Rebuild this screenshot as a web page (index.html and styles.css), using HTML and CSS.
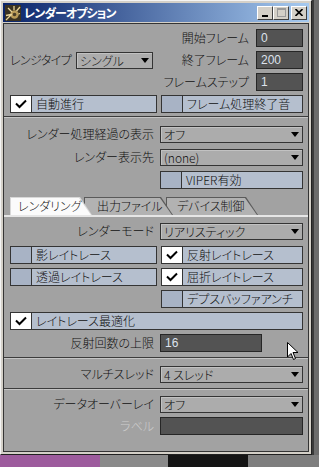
FILE: index.html
```html
<!DOCTYPE html>
<html>
<head>
  <meta charset="UTF-8">
  <title>レンダーオプション</title>
  <link rel="stylesheet" href="styles.css">
</head>
<body>
  <div class="desk">
    <div class="desk-row">
      <div class="window">
        <!-- タイトルバー -->
        <div class="titlebar">
          <svg class="app-icon" width="16" height="16" viewBox="0 0 16 16">
            <rect width="16" height="16" fill="#3a3222"/>
            <circle cx="9.5" cy="9.5" r="4.2" fill="#b89a58"/>
            <circle cx="9.5" cy="9.5" r="1.8" fill="#4a3e28"/>
            <path d="M1 15 L7 9 M1 10.5 L6 9.5 M3 3 L7 7 M9 1 L9 5 M15 2 L11.5 6 M15 8.5 L13.5 9" stroke="#e8d49a" stroke-width="1.3"/>
          </svg>
          <span class="title">レンダーオプション</span>
          <div class="win-btns">
            <span class="wbtn"><i class="g-min"></i></span>
            <span class="wbtn"><i class="g-max"></i></span>
            <span class="wbtn close">
              <svg width="8" height="7" viewBox="0 0 8 7"><path d="M0.5 0 L7.5 7 M7.5 0 L0.5 7" stroke="#000" stroke-width="1.6"/></svg>
            </span>
          </div>
        </div>

        <div class="panel">
          <!-- フレーム設定 -->
          <div class="frame-grid">
            <div></div>
            <div class="num-row"><span class="lbl">開始フレーム</span><span class="num">0</span></div>
            <div class="range-row"><span class="lbl tight">レンジタイプ</span><div class="select range">シングル<i class="arrow"></i></div></div>
            <div class="num-row"><span class="lbl">終了フレーム</span><span class="num">200</span></div>
            <div></div>
            <div class="num-row"><span class="lbl">フレームステップ</span><span class="num">1</span></div>
            <div class="check on"><span class="box"><svg class="tick" width="12" height="10" viewBox="0 0 12 10"><path d="M1 4.5 L4.5 8 L11 1.5" fill="none" stroke="#000" stroke-width="2"/></svg></span><span class="text">自動進行</span></div>
            <div class="check"><span class="box"></span><span class="text">フレーム処理終了音</span></div>
          </div>

          <div class="sep"></div>

          <!-- 表示 -->
          <div class="section s-display">
            <div class="opt-row"><span class="lbl">レンダー処理経過の表示</span><div class="select">オフ<i class="arrow"></i></div></div>
            <div class="opt-row"><span class="lbl">レンダー表示先</span><div class="select">(none)<i class="arrow"></i></div></div>
            <div class="opt-row"><span></span><div class="check"><span class="box"></span><span class="text">VIPER有効</span></div></div>
          </div>

          <!-- タブ -->
          <div class="tabs">
            <span class="tab active">レンダリング</span>
            <span class="tab t2">出力ファイル</span>
            <span class="tab t3">デバイス制御</span>
          </div>

          <div class="section s-render">
            <div class="opt-row"><span class="lbl">レンダーモード</span><div class="select">リアリスティック<i class="arrow"></i></div></div>
            <div class="pair">
              <div class="check"><span class="box"></span><span class="text">影レイトレース</span></div>
              <div class="check on"><span class="box"><svg class="tick" width="12" height="10" viewBox="0 0 12 10"><path d="M1 4.5 L4.5 8 L11 1.5" fill="none" stroke="#000" stroke-width="2"/></svg></span><span class="text">反射レイトレース</span></div>
            </div>
            <div class="pair">
              <div class="check"><span class="box"></span><span class="text">透過レイトレース</span></div>
              <div class="check on"><span class="box"><svg class="tick" width="12" height="10" viewBox="0 0 12 10"><path d="M1 4.5 L4.5 8 L11 1.5" fill="none" stroke="#000" stroke-width="2"/></svg></span><span class="text">屈折レイトレース</span></div>
            </div>
            <div class="pair">
              <div></div>
              <div class="check"><span class="box"></span><span class="text">デプスバッファアンチ</span></div>
            </div>
            <div class="check on"><span class="box"><svg class="tick" width="12" height="10" viewBox="0 0 12 10"><path d="M1 4.5 L4.5 8 L11 1.5" fill="none" stroke="#000" stroke-width="2"/></svg></span><span class="text">レイトレース最適化</span></div>
            <div class="opt-row"><span class="lbl">反射回数の上限</span><span class="num depth">16</span></div>
          </div>

          <div class="sep"></div>

          <div class="section s-thread">
            <div class="opt-row"><span class="lbl">マルチスレッド</span><div class="select">4 スレッド<i class="arrow"></i></div></div>
          </div>

          <div class="sep"></div>

          <div class="section s-overlay">
            <div class="opt-row"><span class="lbl">データオーバーレイ</span><div class="select">オフ<i class="arrow"></i></div></div>
            <div class="opt-row"><span class="lbl disabled">ラベル</span><span class="num wide"></span></div>
          </div>
        </div>

        <!-- マウスカーソル -->
        <svg class="cursor" width="12" height="19" viewBox="0 0 12 19">
          <path d="M0.5 0.5 L0.5 15 L4 11.5 L6.5 17.5 L8.5 16.5 L6 10.5 L11 10.5 Z" fill="#fff" stroke="#000" stroke-width="1"/>
        </svg>
      </div>
      <div class="desk-edge"></div>
    </div>
    <div class="desk-floor"></div>
  </div>
</body>
</html>
```

FILE: styles.css
```css
/* Colours */
:root {
  --frame: #d4d0c8;
  --panel: #a2a2a2;
  --select: #acacac;
  --line: #343434;
  --check-text: #b5bfce;
  --check-box: #a8b3c5;
  --field: #535353;
}

/* General */
body {
  margin: 0;
  font-family: "Noto Sans CJK JP", "Liberation Sans", sans-serif;
  font-size: 12px;
  font-weight: 300;
  font-feature-settings: "palt";
  color: #111;
  background: #2c2c2c;
}
.desk {
  width: 319px;
  height: 467px;
  display: flex;
  flex-direction: column;
}
.desk-row {
  display: flex;
  height: 455px;
}
.desk-edge {
  flex: 1;
  background: #6c6c6c;
  border-left: 2px solid #3a3a3a;
}
.desk-floor {
  flex: 1;
  background: linear-gradient(to right, #9d5b9d 0 100px, #8a8a8a 100px 168px, #141414 168px 248px, #7e7e7e 248px);
}

/* Window */
.window {
  position: relative;
  box-sizing: border-box;
  width: 312px;
  height: 455px;
  padding: 2px;
  background: var(--frame);
  border: 1px solid;
  border-color: #f4f4f4 #202020 #202020 #f4f4f4;
  display: flex;
  flex-direction: column;
}
.titlebar {
  height: 19px;
  display: flex;
  align-items: center;
  padding: 0 2px 0 2px;
  background: linear-gradient(to right, #0a246a, #a6caf0);
}
.app-icon {
  margin-right: 3px;
}
.title {
  flex: 1;
  color: #fff;
  font-weight: bold;
  font-size: 12px;
  letter-spacing: -0.9px;
  line-height: 19px;
}
.win-btns {
  display: flex;
}
.wbtn {
  box-sizing: border-box;
  width: 16px;
  height: 14px;
  background: var(--frame);
  border: 1px solid;
  border-color: #fff #404040 #404040 #fff;
  display: flex;
  align-items: center;
  justify-content: center;
}
.wbtn.close {
  margin-left: 2px;
}
.g-min {
  width: 6px;
  height: 2px;
  background: #000;
  margin-top: 6px;
}
.g-max {
  width: 7px;
  height: 6px;
  border: 1px solid #9a9a9a;
  border-top-width: 2px;
}

/* Panel */
.panel {
  flex: 1;
  margin-top: 1px;
  background: var(--panel);
  border: 1px solid var(--line);
}
.frame-grid {
  display: grid;
  grid-template-columns: 147px 1fr;
  grid-auto-rows: 18px;
  column-gap: 4px;
  row-gap: 4px;
  padding: 5px 5px 0 6px;
}
.num-row {
  display: flex;
  align-items: center;
}
.num-row .lbl {
  flex: 1;
  text-align: right;
}
.num-row .num {
  width: 47px;
  margin-left: 7px;
}
.range-row {
  display: flex;
  align-items: center;
}
.select.range {
  width: 77px;
  margin-left: auto;
  margin-right: 4px;
}
.lbl {
  line-height: 18px;
  white-space: nowrap;
}
.lbl.tight {
  letter-spacing: -0.6px;
}
.lbl.disabled {
  color: #cdcdcd;
}

/* Separator */
.sep {
  height: 1px;
  border-top: 1px solid #3c3c3c;
  background: #c4c4c4;
}
.frame-grid + .sep {
  margin-top: 3px;
}

/* Sections */
.section {
  display: flex;
  flex-direction: column;
  gap: 4px;
  padding: 0 5px 0 6px;
}
.s-display {
  padding-top: 7px;
  gap: 5px;
}
.s-render {
  padding-top: 5px;
  padding-bottom: 5px;
}
.s-render .opt-row:first-child {
  margin-bottom: 2px;
}
.s-thread {
  padding-top: 6px;
  padding-bottom: 5px;
}
.s-overlay {
  padding-top: 5px;
}
.opt-row {
  display: grid;
  grid-template-columns: 144px 1fr;
  column-gap: 6px;
  align-items: center;
}
.opt-row .lbl {
  text-align: right;
}
.pair {
  display: grid;
  grid-template-columns: 147px 1fr;
  column-gap: 4px;
}

/* Dropdowns */
.select {
  box-sizing: border-box;
  height: 17px;
  line-height: 15px;
  padding-left: 3px;
  background: var(--select);
  border: 1px solid var(--line);
  box-shadow: inset 1px 1px #c2c2c2;
  display: flex;
  align-items: center;
}
.arrow {
  margin-left: auto;
  margin-right: 3px;
  width: 0;
  height: 0;
  border-left: 4.5px solid transparent;
  border-right: 4.5px solid transparent;
  border-top: 5px solid #000;
}

/* Number fields */
.num {
  box-sizing: border-box;
  height: 18px;
  line-height: 16px;
  padding-left: 4px;
  background: var(--field);
  border: 1px solid #262626;
  color: #dde2ec;
  font-family: "Liberation Sans", sans-serif;
  font-size: 12px;
  font-weight: normal;
}
.num.depth {
  width: 102px;
}

/* Check fields */
.check {
  box-sizing: border-box;
  height: 18px;
  display: flex;
  border: 1px solid var(--line);
  background: var(--check-text);
}
.check .box {
  width: 20px;
  flex: none;
  background: var(--check-box);
  border-right: 1px solid var(--line);
  display: flex;
  align-items: center;
  justify-content: center;
}
.check.on .box {
  background: #fff;
}
.check .text {
  padding-left: 4px;
  line-height: 16px;
  white-space: nowrap;
}

/* Tabs */
.tabs {
  display: flex;
  margin-top: 8px;
  padding-left: 6px;
  border-bottom: 2px solid #e6e6e6;
}
.tab {
  position: relative;
  z-index: 3;
  box-sizing: border-box;
  height: 18px;
  line-height: 18px;
  padding-left: 8px;
  width: 82px;
  white-space: nowrap;
}
.tab::before,
.tab::after {
  content: '';
  position: absolute;
  z-index: -1;
  clip-path: polygon(0 0, calc(100% - 12px) 0, 100% 100%, 0 100%);
}
.tab::before {
  inset: 0;
  background: #5a5a5a;
}
.tab::after {
  inset: 1px 1px 0 1px;
  background: #b2b2b2;
}
.tab.active::before {
  background: #d8d8d8;
}
.tab.active::after {
  background: #fbfbfb;
}
.tab.t2 {
  z-index: 2;
  width: 89px;
  margin-left: -8px;
  padding-left: 13px;
}
.tab.t3 {
  z-index: 1;
  width: 92px;
  margin-left: -7px;
  padding-left: 11px;
}

/* Cursor */
.cursor {
  position: absolute;
  left: 286px;
  top: 341px;
}
```
